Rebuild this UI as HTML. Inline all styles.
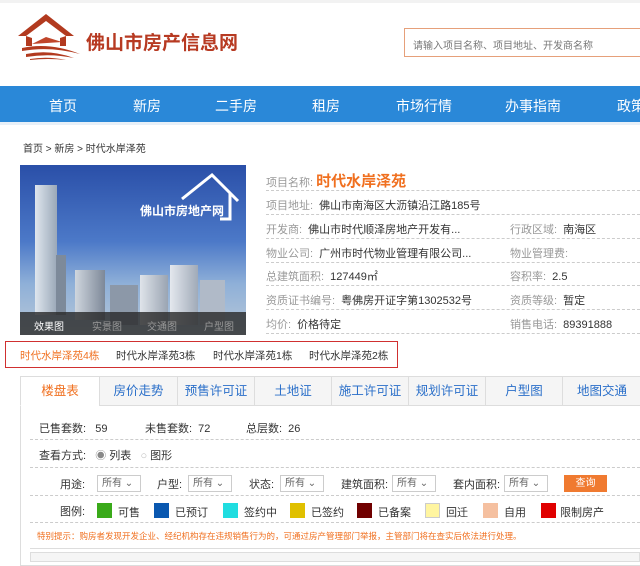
<!DOCTYPE html>
<html><head><meta charset="utf-8"><style>
*{margin:0;padding:0;box-sizing:border-box}
body{width:640px;height:560px;overflow:hidden;background:#fff;font-family:"Liberation Sans","Noto Sans CJK SC",sans-serif;font-size:11px;color:#333;position:relative}
.a{position:absolute;white-space:nowrap}
.nav span{position:absolute;top:96px;color:#fff;font-size:14px;transform:translateX(-50%);white-space:nowrap}
.lab{color:#999}
.dash{position:absolute;height:0;border-top:1px dashed #ccc}
.tab{position:absolute;top:376px;height:30px;border:1px solid #ddd;background:#f5f5f5;color:#2a6fc9;font-size:12.5px;text-align:center;line-height:28px;white-space:nowrap}
.sel{position:absolute;top:475px;height:17px;border:1px solid #ccc;font-size:10px;color:#666;padding-left:4px;line-height:15px;white-space:nowrap}
.sw{position:absolute;top:503px;width:15px;height:15px}
</style></head><body>
<div class="a" style="left:0;top:0;width:640px;height:3px;background:#f2f2f2"></div>
<svg class="a" style="left:16px;top:12px" width="68" height="48" viewBox="0 0 68 48">
<path d="M2 24 L30 2 L58 24 L50 24 L30 9 L10 24 Z" fill="#b23a1f"/>
<path d="M10 24 L10 34 L16 34 L16 26 Z M50 24 L50 34 L44 34 L44 26Z" fill="#b23a1f"/>
<path d="M16 32 L30 25 L46 30 Z" fill="#c0452a"/>
<path d="M6 36 Q34 30 64 42 Q34 34 6 39Z" fill="#b23a1f"/>
<path d="M10 42 Q34 37 58 46 Q34 41 10 45Z" fill="#b23a1f"/>
<path d="M14 47 Q32 44 50 48 Q32 46 14 48Z" fill="#b23a1f"/>
</svg>
<div class="a" style="left:86px;top:28px;font-size:19px;font-weight:bold;color:#b73a22">佛山市房产信息网</div>
<div class="a" style="left:404px;top:28px;width:240px;height:29px;border:1px solid #e6a07a;padding:8px 0 0 8px;font-size:10px;color:#777">请输入项目名称、项目地址、开发商名称</div>
<div class="a" style="left:0;top:86px;width:640px;height:36px;background:#2a88d8"></div>
<div class="nav"><span style="left:63px">首页</span><span style="left:147px">新房</span><span style="left:236px">二手房</span><span style="left:326px">租房</span><span style="left:424px">市场行情</span><span style="left:533px">办事指南</span><span style="left:617px;transform:none">政策</span></div>
<div class="a" style="left:0;top:122px;width:640px;height:3px;background:#e8f0f8"></div>
<div class="a" style="left:23px;top:140px;font-size:10px">首页 &gt; 新房 &gt; 时代水岸泽苑</div>
<div class="a" style="left:20px;top:165px;width:226px;height:170px;background:linear-gradient(180deg,#2a4fa8 0%,#4c79c8 45%,#8fb0d8 70%,#b8c8d8 100%);overflow:hidden">
<div class="a" style="left:15px;top:20px;width:22px;height:130px;background:linear-gradient(90deg,#dfe6ee,#9aa8b8)"></div>
<div class="a" style="left:36px;top:90px;width:10px;height:60px;background:#7d8a9a"></div>
<div class="a" style="left:55px;top:105px;width:30px;height:50px;background:linear-gradient(90deg,#cfd6de,#7d8898)"></div>
<div class="a" style="left:90px;top:120px;width:28px;height:40px;background:#8c98a8"></div>
<div class="a" style="left:120px;top:110px;width:28px;height:50px;background:linear-gradient(90deg,#dfe4ea,#9aa4b2)"></div>
<div class="a" style="left:150px;top:100px;width:28px;height:60px;background:linear-gradient(90deg,#e4e8ee,#a0aab8)"></div>
<div class="a" style="left:180px;top:115px;width:25px;height:45px;background:#b0bac8"></div>
<div class="a" style="left:120px;top:37px;font-size:12px;color:#fff;font-weight:bold">佛山市房地产网</div>
<svg class="a" style="left:160px;top:8px" width="60" height="50"><path d="M2 26 L32 2 L58 28 M50 20 L50 46 L40 46" stroke="#fff" stroke-width="3" fill="none"/></svg>
<div class="a" style="left:0;top:147px;width:226px;height:23px;background:rgba(40,40,40,.8)"></div>
<div class="a" style="left:14px;top:153px;color:#fff;font-size:10px">效果图</div>
<div class="a" style="left:72px;top:153px;color:#999;font-size:10px">实景图</div>
<div class="a" style="left:127px;top:153px;color:#999;font-size:10px">交通图</div>
<div class="a" style="left:184px;top:153px;color:#999;font-size:10px">户型图</div>
</div>
<div class="a" style="left:266px;top:170px"><span class="lab">项目名称:</span> <span style="color:#f07020;font-size:15px;font-weight:bold">时代水岸泽苑</span></div>
<div class="a" style="left:266px;top:197px"><span class="lab">项目地址:</span>&nbsp; 佛山市南海区大沥镇沿江路185号</div>
<div class="a" style="left:266px;top:221px"><span class="lab">开发商:</span>&nbsp; 佛山市时代顺泽房地产开发有...</div>
<div class="a" style="left:510px;top:221px"><span class="lab">行政区域:</span>&nbsp; 南海区</div>
<div class="a" style="left:266px;top:245px"><span class="lab">物业公司:</span>&nbsp; 广州市时代物业管理有限公司...</div>
<div class="a" style="left:510px;top:245px"><span class="lab">物业管理费:</span></div>
<div class="a" style="left:266px;top:268px"><span class="lab">总建筑面积:</span>&nbsp; 127449㎡</div>
<div class="a" style="left:510px;top:268px"><span class="lab">容积率:</span>&nbsp; 2.5</div>
<div class="a" style="left:266px;top:292px"><span class="lab">资质证书编号:</span>&nbsp; 粤佛房开证字第1302532号</div>
<div class="a" style="left:510px;top:292px"><span class="lab">资质等级:</span>&nbsp; 暂定</div>
<div class="a" style="left:266px;top:316px"><span class="lab">均价:</span>&nbsp; 价格待定</div>
<div class="a" style="left:510px;top:316px"><span class="lab">销售电话:</span>&nbsp; 89391888</div>
<div class="dash" style="left:266px;top:190px;width:374px"></div>
<div class="dash" style="left:266px;top:214px;width:374px"></div>
<div class="dash" style="left:266px;top:238px;width:374px"></div>
<div class="dash" style="left:266px;top:262px;width:374px"></div>
<div class="dash" style="left:266px;top:285px;width:374px"></div>
<div class="dash" style="left:266px;top:309px;width:374px"></div>
<div class="dash" style="left:266px;top:333px;width:374px"></div>
<div class="a" style="left:5px;top:341px;width:393px;height:27px;border:1px solid #d03030"></div>
<div class="a" style="left:20px;top:348px;color:#f07020;font-size:10.5px">时代水岸泽苑4栋</div>
<div class="a" style="left:116px;top:348px;font-size:10.5px">时代水岸泽苑3栋</div>
<div class="a" style="left:213px;top:348px;font-size:10.5px">时代水岸泽苑1栋</div>
<div class="a" style="left:309px;top:348px;font-size:10.5px">时代水岸泽苑2栋</div>
<div class="a" style="left:20px;top:376px;width:640px;height:190px;border:1px solid #ddd"></div>
<div class="tab" style="left:20px;width:80px;background:#fff;color:#f07020;border-bottom-color:#fff">楼盘表</div>
<div class="tab" style="left:99px;width:79px">房价走势</div>
<div class="tab" style="left:177px;width:78px">预售许可证</div>
<div class="tab" style="left:254px;width:78px">土地证</div>
<div class="tab" style="left:331px;width:78px">施工许可证</div>
<div class="tab" style="left:408px;width:78px">规划许可证</div>
<div class="tab" style="left:485px;width:78px">户型图</div>
<div class="tab" style="left:562px;width:80px">地图交通</div>
<div class="a" style="left:39px;top:420px">已售套数:&nbsp;&nbsp; 59</div>
<div class="a" style="left:145px;top:420px">未售套数:&nbsp; 72</div>
<div class="a" style="left:246px;top:420px">总层数:&nbsp; 26</div>
<div class="dash" style="left:30px;top:439px;width:610px"></div>
<div class="a" style="left:39px;top:447px">查看方式:&nbsp;&nbsp; <span style="color:#888">◉</span> 列表 &nbsp; <span style="color:#bbb">○</span> 图形</div>
<div class="dash" style="left:30px;top:467px;width:610px"></div>
<div class="a" style="left:60px;top:476px">用途:</div><div class="sel" style="left:97px;width:44px">所有 ⌄</div>
<div class="a" style="left:157px;top:476px">户型:</div><div class="sel" style="left:188px;width:44px">所有 ⌄</div>
<div class="a" style="left:249px;top:476px">状态:</div><div class="sel" style="left:280px;width:44px">所有 ⌄</div>
<div class="a" style="left:341px;top:476px">建筑面积:</div><div class="sel" style="left:392px;width:44px">所有 ⌄</div>
<div class="a" style="left:453px;top:476px">套内面积:</div><div class="sel" style="left:504px;width:44px">所有 ⌄</div>
<div class="a" style="left:564px;top:475px;width:43px;height:17px;background:#f07a30;color:#fff;text-align:center;line-height:17px;font-size:10px">查询</div>
<div class="dash" style="left:30px;top:495px;width:610px"></div>
<div class="a" style="left:60px;top:503px">图例:</div>
<div class="sw" style="left:97px;background:#3aaa1a"></div><div class="a" style="left:118px;top:504px">可售</div>
<div class="sw" style="left:154px;background:#0a58b0"></div><div class="a" style="left:175px;top:504px">已预订</div>
<div class="sw" style="left:223px;background:#20dde0"></div><div class="a" style="left:244px;top:504px">签约中</div>
<div class="sw" style="left:290px;background:#e0c000"></div><div class="a" style="left:311px;top:504px">已签约</div>
<div class="sw" style="left:357px;background:#700000"></div><div class="a" style="left:378px;top:504px">已备案</div>
<div class="sw" style="left:425px;background:#fff5a0;border:1px solid #ccc"></div><div class="a" style="left:446px;top:504px">回迁</div>
<div class="sw" style="left:483px;background:#f5c0a0"></div><div class="a" style="left:504px;top:504px">自用</div>
<div class="sw" style="left:541px;background:#e00000"></div><div class="a" style="left:560px;top:504px">限制房产</div>
<div class="dash" style="left:30px;top:522px;width:610px"></div>
<div class="a" style="left:37px;top:530px;color:#f07020;font-size:8.5px">特别提示：购房者发现开发企业、经纪机构存在违规销售行为的，可通过房产管理部门举报，主管部门将在查实后依法进行处理。</div>
<div class="a" style="left:30px;top:548px;width:610px;border-top:1px solid #ddd"></div>
<div class="a" style="left:30px;top:552px;width:610px;height:10px;border:1px solid #ddd;background:#f5f5f5"></div>
</body></html>
